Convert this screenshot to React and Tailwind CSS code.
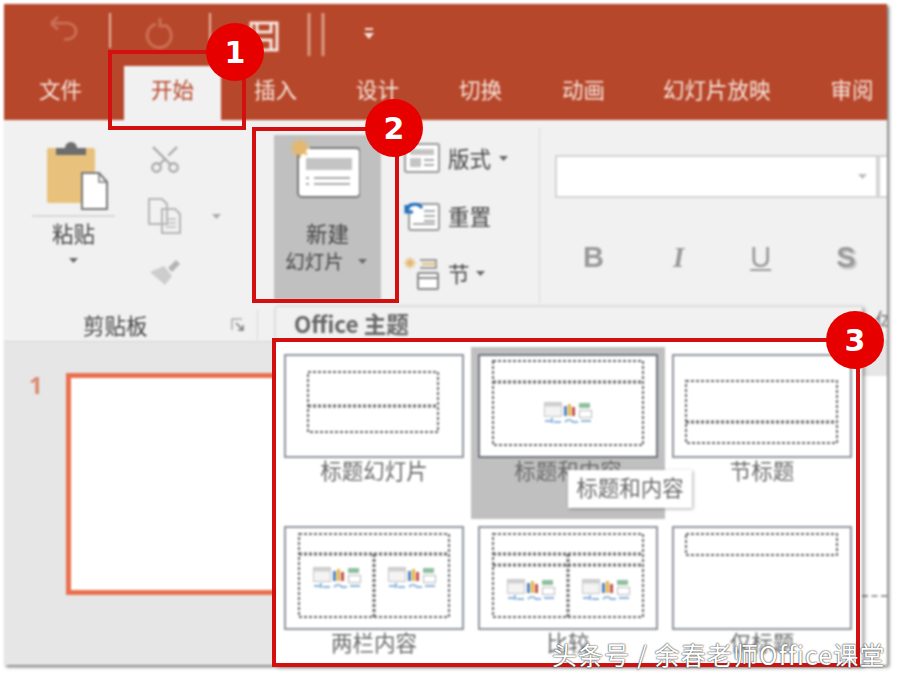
import React from 'react';
import { Scissors } from 'lucide-react';

const tabs = [
  { label: '文件', cls: 'ml-[35px] mr-[42px] text-[#f7e6de]' },
  { label: '开始', cls: 'px-[27px] bg-[#f1f1f1] text-[#b7472a] mr-[33px]' },
  { label: '插入', cls: 'mr-[59px] text-[#f7e6de]' },
  { label: '设计', cls: 'mr-[60px] text-[#f7e6de]' },
  { label: '切换', cls: 'mr-[60px] text-[#f7e6de]' },
  { label: '动画', cls: 'mr-[58px] text-[#f7e6de]' },
  { label: '幻灯片放映', cls: 'mr-[60px] text-[#f7e6de]' },
  { label: '审阅', cls: 'text-[#f7e6de]' },
];

const Caret = ({ className = '', color = '#666' }) => (
  <svg className={className} width="9" height="5" viewBox="0 0 9 5">
    <path d="M0 0h9L4.5 5z" fill={color} />
  </svg>
);

const ContentIcons = ({ x, y }) => (
  <g transform={`translate(${x - 24} ${y - 11})`}>
    <rect x="0.5" y="0.5" width="17" height="14" fill="#f4f4f4" stroke="#c4c4c4" />
    <rect x="0.5" y="0.5" width="17" height="4" fill="#cfcfcf" />
    <rect x="20" y="4" width="3" height="10" fill="#4f81bd" />
    <rect x="24" y="2" width="3" height="12" fill="#e8b33f" />
    <rect x="28" y="5" width="3" height="9" fill="#c0504d" />
    <rect x="35" y="1" width="11" height="5" fill="#8fbf9f" />
    <rect x="35.5" y="8.5" width="12" height="7" fill="#fff" stroke="#b9b9b9" />
    <path d="M1 19h6M8 16v5M10 20h7" stroke="#8db4dc" strokeWidth="2" fill="none" />
    <path d="M21 20c3-3 5-3 8 0h5M37 19h10" stroke="#8db4dc" strokeWidth="2" fill="none" />
  </g>
);

// dashed placeholders inside each layout thumbnail
const layouts = [
  { label: '标题幻灯片', rect: [22, 16, 130, 60], lines: [[22, 50, 152, 50]], icons: [] },
  { label: '标题和内容', active: true, rect: [13, 5, 150, 84], lines: [[13, 26, 163, 26]], icons: [[88, 57]] },
  { label: '节标题', rect: [12, 25, 151, 62], lines: [[12, 66, 163, 66]], icons: [] },
  { label: '两栏内容', rect: [13, 6, 150, 83], lines: [[13, 26, 163, 26], [88, 26, 88, 89]], icons: [[51, 50], [126, 50]] },
  { label: '比较', rect: [13, 6, 150, 83], lines: [[13, 26, 163, 26], [13, 37, 163, 37], [88, 26, 88, 89]], icons: [[51, 62], [126, 62]] },
  { label: '仅标题', rect: [12, 6, 151, 21], lines: [], icons: [] },
];

const LayoutThumb = ({ layout }) => (
  <div className={`relative h-[172px] px-[7px] pt-[7px] flex flex-col items-center ${layout.active ? 'bg-[#c0c0c0]' : ''}`}>
    <div className={`w-[180px] h-[104px] bg-white border-2 ${layout.active ? 'border-[#70757f]' : 'border-[#90949d]'}`}>
      <svg className="block" width="176" height="100" viewBox="0 0 176 100">
        <g fill="none" stroke="#666" strokeWidth="2" strokeDasharray="3 2">
          <rect x={layout.rect[0]} y={layout.rect[1]} width={layout.rect[2]} height={layout.rect[3]} />
          {layout.lines.map((l, i) => (
            <line key={i} x1={l[0]} y1={l[1]} x2={l[2]} y2={l[3]} strokeWidth="3" />
          ))}
        </g>
        {layout.icons.map((p, i) => (
          <ContentIcons key={i} x={p[0]} y={p[1]} />
        ))}
      </svg>
    </div>
    <span className="mt-[1px] text-[21.5px] leading-[22px] text-[#6a6a6a]">{layout.label}</span>
    {layout.active && (
      <div className="absolute left-[97px] top-[123px] w-[124px] h-[38px] pb-[4px] bg-white shadow-[1px_1px_3px_rgba(0,0,0,0.35)] flex items-center justify-center text-[21.5px] text-[#6a6a6a] whitespace-nowrap">
        标题和内容
      </div>
    )}
  </div>
);

const Badge = ({ n, className }) => (
  <div className={`absolute w-[58px] h-[58px] rounded-full bg-[#e60000] text-white flex items-center justify-center text-[30px] font-bold font-['DejaVu_Sans',sans-serif] ${className}`}>
    {n}
  </div>
);

const Box = ({ className }) => <div className={`absolute border-4 border-[#d40f0f] ${className}`}></div>;

export default function App() {
  return (
    <div className="relative w-[900px] h-[676px] bg-white overflow-hidden font-['Noto_Sans_CJK_SC','Noto_Sans',sans-serif] pl-[4px] pt-[4px]">
      {/* PowerPoint window */}
      <div className="relative w-[883px] h-[661px] flex flex-col shadow-[2px_2px_3px_rgba(0,0,0,0.55)] blur-[0.8px]">
        {/* Title + tabs */}
        <div className="h-[116px] bg-[#b7472a] flex flex-col shrink-0">
          <div className="h-[62px] relative flex items-start">
            <svg className="block" width="400" height="62" viewBox="0 0 400 62">
              <path d="M47 28l7-7M47 28l7 7M47 28h16a9 9 0 0 1 0 18h-3" transform="translate(0 -6) scale(1 0.9)" fill="none" stroke="#c96f55" strokeWidth="3" />
              <path d="M106 9v35M206 9v35" stroke="#e3b3a2" strokeWidth="2" />
              <path d="M161 21a12 12 0 1 1-9-1M156 14v8h8" fill="none" stroke="#c96f55" strokeWidth="3" />
              <path d="M247 19h26v27h-26z M253 19v9h14v-9 M253 46v-10h14v10" fill="none" stroke="#f7e6de" strokeWidth="3" />
              <path d="M305 9v43M319 9v43" stroke="#d99a85" strokeWidth="3" />
              <path d="M361 25h8" stroke="#f7e6de" strokeWidth="2" />
              <path d="M360 29h10l-5 6z" fill="#f7e6de" />
            </svg>
          </div>
          <div className="flex-1 flex">
            {tabs.map(t => (
              <div key={t.label} className={`flex items-center text-[21.5px] leading-none pb-[8px] whitespace-nowrap ${t.cls}`}>
                {t.label}
              </div>
            ))}
          </div>
        </div>

        {/* Ribbon */}
        <div className="h-[222px] bg-[#f1f1f1] border-b border-[#d6d6d6] flex shrink-0 overflow-hidden">
          {/* Clipboard */}
          <div className="w-[254px] shrink-0 flex flex-col">
            <div className="flex h-[188px]">
              <div className="ml-[26px] w-[87px] flex flex-col items-center pt-[20px]">
                <svg className="ml-[8px]" width="62" height="70" viewBox="0 0 62 70">
                  <rect x="0" y="8" width="48" height="55" rx="2" fill="#e8c27c" />
                  <path d="M9 15V8h9a6 6 0 0 1 12 0h9v7z" fill="#6d6d6d" />
                  <path d="M35 33h17l8 9v27H35z" fill="#fff" stroke="#777" strokeWidth="2" />
                  <path d="M52 33v9h8" fill="none" stroke="#777" strokeWidth="1.5" />
                </svg>
                <div className="w-[83px] border-t-2 border-[#d8d8d8] mt-[5px]"></div>
                <span className="mt-[4px] text-[21.5px] leading-[24px] text-[#444]">粘贴</span>
                <Caret className="mt-[13px]" />
              </div>
              <div className="ml-[31px] flex flex-col pt-[22px]">
                <Scissors size={34} color="#a9a9a9" strokeWidth={1.6} className="-rotate-90" />
                <div className="flex items-center mt-[22px]">
                  <svg width="34" height="36" viewBox="0 0 34 36">
                    <path d="M1 1h13l5 5v20H1zM14 11h13l5 5v19H14z" fill="#f1f1f1" stroke="#b5b5b5" strokeWidth="2" />
                    <path d="M18 21h10M18 25h10M18 29h10" stroke="#bbb" strokeWidth="1.5" />
                  </svg>
                  <Caret className="ml-[30px]" color="#aaa" />
                </div>
                <svg className="mt-[22px]" width="34" height="30" viewBox="0 0 34 30">
                  <path d="M2 16l14-6 8 10-7 9z" fill="#cdcdcd" />
                  <path d="M20 12l8-8 4 4-8 8z" fill="#b5b5b5" />
                </svg>
              </div>
            </div>
            <div className="flex items-center h-[33px] pl-[79px]">
              <span className="text-[21.5px] leading-none text-[#444] whitespace-nowrap shrink-0">剪贴板</span>
              <svg className="ml-[83px] shrink-0" width="13" height="13" viewBox="0 0 13 13">
                <path d="M1 12V1h10" fill="none" stroke="#aaa" strokeWidth="1.5" />
                <path d="M5 5l7 7M7 12h5V7" fill="none" stroke="#777" strokeWidth="1.5" />
              </svg>
              <div className="ml-[13px] w-px h-[30px] bg-[#d9d9d9] shrink-0"></div>
            </div>
          </div>

          {/* Slides */}
          <div className="w-[282px] shrink-0 border-r border-[#d9d9d9] flex mt-[8px] h-[175px] pl-[16px]">
            <div className="w-[107px] h-[165px] mt-[7px] bg-[#c0c0c0] flex flex-col items-center">
              <svg className="mt-[3px] -ml-[16px]" width="80" height="62" viewBox="0 0 80 62">
                <rect x="18" y="10" width="62" height="49" rx="4" fill="#fff" stroke="#777" strokeWidth="2" />
                <rect x="26" y="20" width="46" height="12" fill="#c4c4c4" />
                <path d="M34 40h36M34 46h36M26 40h3M26 46h3" stroke="#aaa" strokeWidth="2" />
                <circle cx="20" cy="10" r="7" fill="#e3b86f" />
                <path d="M20 0v20M10 10h20M13 3l14 14M27 3L13 17" stroke="#e3b86f" strokeWidth="2" />
              </svg>
              <span className="mt-[20px] text-[21.5px] leading-[26px] text-[#444]">新建</span>
              <div className="flex items-center mt-[2px] -ml-[3px]">
                <span className="text-[19.5px] leading-[26px] text-[#444]">幻灯片</span>
                <Caret className="ml-[14px]" />
              </div>
            </div>
            <div className="ml-[23px] flex flex-col pt-[15px]">
              <div className="flex items-center h-[30px]">
                <svg width="36" height="30" viewBox="0 0 36 30">
                  <rect x="1" y="1" width="34" height="28" rx="2" fill="#fff" stroke="#999" strokeWidth="2" />
                  <rect x="6" y="6" width="24" height="6" fill="#c4c4c4" />
                  <rect x="6" y="15" width="11" height="9" fill="#c4c4c4" />
                  <path d="M20 17h10M20 22h10" stroke="#aaa" strokeWidth="2" />
                </svg>
                <span className="ml-[8px] text-[21.5px] leading-none text-[#444]">版式</span>
                <Caret className="ml-[8px]" />
              </div>
              <div className="flex items-center h-[30px] mt-[28px]">
                <svg width="36" height="30" viewBox="0 0 36 30">
                  <rect x="5" y="3" width="30" height="26" rx="2" fill="#fff" stroke="#999" strokeWidth="2" />
                  <path d="M20 10h11M20 15h11M20 20h11M9 23h22" stroke="#aaa" strokeWidth="2" />
                  <path d="M2 10a9 9 0 0 1 16-3M2 4v7h7" fill="none" stroke="#1f6fc0" strokeWidth="3" />
                </svg>
                <span className="ml-[8px] text-[21.5px] leading-none text-[#444]">重置</span>
              </div>
              <div className="flex items-center h-[34px] mt-[25px]">
                <svg width="36" height="34" viewBox="0 0 36 34">
                  <circle cx="6" cy="7" r="3" fill="#e3b86f" />
                  <path d="M6 1v12M0 7h12M2 3l8 8M10 3l-8 8" stroke="#e3b86f" strokeWidth="1.5" />
                  <path d="M16 4h16v8H16" fill="none" stroke="#999" strokeWidth="2" />
                  <path d="M18 8h14" stroke="#e3b86f" strokeWidth="2" />
                  <rect x="14" y="17" width="20" height="16" rx="1" fill="#fff" stroke="#888" strokeWidth="2" />
                  <path d="M14 22h20" stroke="#888" strokeWidth="2" />
                </svg>
                <span className="ml-[8px] text-[21.5px] leading-none text-[#444]">节</span>
                <Caret className="ml-[6px]" />
              </div>
            </div>
          </div>

          {/* Font */}
          <div className="flex-1 pl-[15px] pt-[35px] flex flex-col min-w-0 overflow-hidden">
            <div className="flex">
              <div className="w-[323px] h-[43px] bg-white border-2 border-[#d4d4d4] flex items-center justify-end pr-[9px] shrink-0">
                <Caret color="#bbb" />
              </div>
              <div className="w-[20px] h-[43px] bg-white border-2 border-[#d4d4d4] shrink-0"></div>
            </div>
            <div className="flex items-center h-[32px] mt-[43px] text-[29px] leading-none font-['Liberation_Sans',sans-serif] text-[#999]">
              <span className="ml-[28px] font-bold">B</span>
              <span className="ml-[69px] font-bold italic font-['Liberation_Serif',serif]">I</span>
              <span className="ml-[66px] underline">U</span>
              <span className="ml-[65px] font-bold [text-shadow:2px_2px_2px_#bbb]">S</span>
            </div>
            <span className="ml-[320px] mt-[36px] text-[21px] leading-none text-[#777] whitespace-nowrap">体</span>
          </div>
        </div>

        {/* Thumbnails pane + editing area */}
        <div className="flex-1 flex min-h-0 overflow-hidden">
          <div className="w-[858px] bg-[#e6e6e6] shrink-0 flex items-start overflow-hidden pt-[31px]">
            <span className="ml-[25px] w-[16px] text-[24px] leading-[24px] font-bold font-['Open_Sans',sans-serif] text-[#d98a72]">1</span>
            <div className="ml-[21px] w-[320px] h-[222px] bg-white border-[5px] border-[#e9704f] shrink-0"></div>
          </div>
          <div className="flex-1 flex flex-col">
            <div className="h-[34px] bg-[#e6e6e6]"></div>
            <div className="flex-1 bg-white">
              <div className="mt-[219px] border-t-2 border-dashed border-[#999]"></div>
            </div>
          </div>
        </div>

        {/* New slide dropdown */}
        <div className="absolute left-[271px] top-[302px] w-[587px] h-[359px] bg-white shadow-[2px_2px_4px_rgba(0,0,0,0.45)] flex flex-col overflow-hidden">
          <div className="h-[34px] bg-[#f1f1f1] border-t border-l border-[#d9d9d9] flex items-center pl-[18px] text-[22.5px] leading-none font-bold text-[#666] shrink-0">
            Office 主题
          </div>
          <div className="grid grid-cols-[194px_194px_194px] pl-[2px] pt-[7px]">
            {layouts.map(l => (
              <LayoutThumb key={l.label} layout={l} />
            ))}
          </div>
        </div>
      </div>

      {/* Annotations */}
      <Box className="left-[108px] top-[50px] w-[138px] h-[80px]" />
      <Box className="left-[252px] top-[127px] w-[147px] h-[176px]" />
      <Box className="left-[272px] top-[338px] w-[588px] h-[329px]" />
      <Badge n="1" className="left-[206px] top-[23px]" />
      <Badge n="2" className="left-[365px] top-[99px]" />
      <Badge n="3" className="left-[826px] top-[311px]" />

      <div className="absolute left-[552px] top-[639px] text-[25px] leading-[30px] tracking-[1.1px] whitespace-nowrap text-white [text-shadow:0_0_2px_#444,0_0_1px_#444]">
        头条号 / 余春老师Office课堂
      </div>
    </div>
  );
}
